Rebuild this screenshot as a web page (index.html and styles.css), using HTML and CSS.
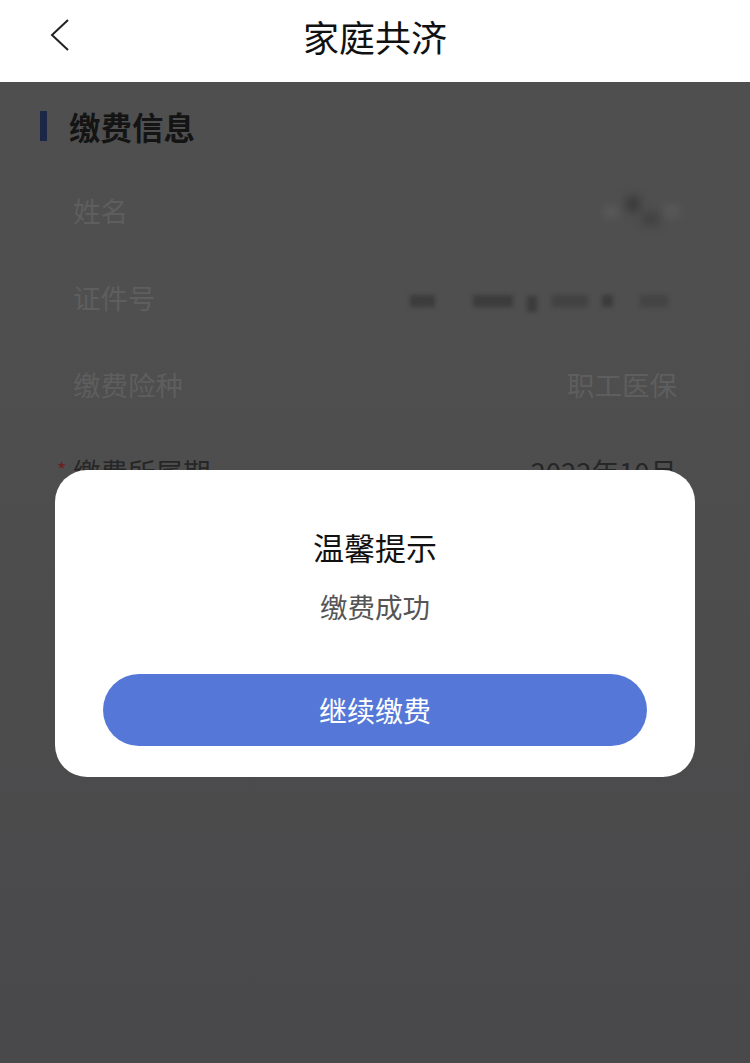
FILE: index.html
```html
<!DOCTYPE html>
<html lang="zh-CN">
<head>
    <meta charset="UTF-8">
    <meta name="viewport" content="width=device-width, initial-scale=1.0">
    <title>家庭共济</title>
    <link rel="stylesheet" href="styles.css">
</head>
<body>
<div class="header">
    <div class="back">
        <svg width="30" height="40" viewBox="0 0 30 40">
            <polyline points="21,5 5,20 21,35" fill="none" stroke="#222" stroke-width="2"/>
        </svg>
    </div>
    <div class="header-title">家庭共济</div>
</div>

<div class="page">
    <div class="section-title">
        <span class="bar"></span>
        <span>缴费信息</span>
    </div>
    <div class="row">
        <div class="label">姓名</div>
        <div class="value">
            <div class="blur-name">
                <span class="px px1"></span>
                <span class="px px2"></span>
                <span class="px px3"></span>
                <span class="px px4"></span>
            </div>
        </div>
    </div>
    <div class="row">
        <div class="label">证件号</div>
        <div class="value">
            <div class="blur-id">
                <span class="seg s1"></span>
                <span class="seg s2"></span>
                <span class="seg s3"></span>
                <span class="seg s4"></span>
                <span class="seg s5"></span>
                <span class="seg s6"></span>
            </div>
        </div>
    </div>
    <div class="row">
        <div class="label">缴费险种</div>
        <div class="value">职工医保</div>
    </div>
    <div class="row dark">
        <div class="label"><span class="star">*</span>缴费所属期</div>
        <div class="value">2022年10月</div>
    </div>
</div>

<div class="mask">
    <div class="dialog">
        <div class="dialog-title">温馨提示</div>
        <div class="dialog-msg">缴费成功</div>
        <div class="dialog-btn">继续缴费</div>
    </div>
</div>
</body>
</html>
```

FILE: styles.css
```css
* {
    box-sizing: border-box;
}
body {
    margin: 0;
    width: 750px;
    height: 1063px;
    overflow: hidden;
    background: linear-gradient(#4f4f4f 300px, #49494b 1063px);
    font-family: "Noto Sans CJK SC", "Noto Sans", sans-serif;
}
.header {
    height: 82px;
    background-color: #fff;
    display: flex;
    align-items: center;
    justify-content: center;
    position: relative;
}
.back {
    position: absolute;
    left: 47px;
    top: 15px;
}
.header-title {
    font-size: 36px;
    color: #111;
    line-height: 44px;
    margin-top: -10px;
}
.page {
    padding-top: 22px;
}
.section-title {
    display: flex;
    align-items: center;
    height: 44px;
    padding-left: 40px;
    font-size: 31.5px;
    font-weight: bold;
    color: #141414;
}
.bar {
    width: 7px;
    height: 30px;
    background-color: #1c2646;
    margin-right: 22px;
}
.row {
    display: flex;
    align-items: center;
    justify-content: space-between;
    height: 87px;
    padding: 0 73px;
    font-size: 27.5px;
    color: #5e5e5e;
}
.section-title + .row {
    margin-top: 18px;
}
.row.dark {
    color: #262626;
}
.label {
    position: relative;
}
.star {
    position: absolute;
    left: -16px;
    top: 4px;
    font-size: 20px;
    color: #6b1f1f;
}
.blur-name {
    width: 88px;
    height: 48px;
    position: relative;
    margin-right: -13px;
    filter: blur(4px);
}
.px {
    position: absolute;
    background-color: #3c3c3c;
}
.px1 {
    left: 24px;
    top: 10px;
    width: 14px;
    height: 16px;
}
.px2 {
    left: 40px;
    top: 26px;
    width: 18px;
    height: 14px;
    background-color: #424242;
}
.px3 {
    left: 2px;
    top: 20px;
    width: 14px;
    height: 12px;
    background-color: #5a5a5a;
}
.px4 {
    left: 62px;
    top: 18px;
    width: 16px;
    height: 14px;
    background-color: #585858;
}
.blur-id {
    display: flex;
    align-items: center;
    filter: blur(2px);
    margin-top: 8px;
    margin-right: 9px;
}
.seg {
    height: 12px;
    background-color: #3c3c3c;
}
.s1 { width: 25px; }
.s2 { width: 40px; margin-left: 38px; }
.s3 { width: 10px; margin-left: 14px; height: 16px; margin-top: 6px; }
.s4 { width: 36px; margin-left: 15px; background-color: #424242; }
.s5 { width: 11px; margin-left: 14px; }
.s6 { width: 28px; margin-left: 27px; background-color: #444; }
.mask {
    position: absolute;
    left: 0;
    top: 82px;
    right: 0;
    bottom: 0;
}
.dialog {
    position: absolute;
    left: 55px;
    top: 388px;
    width: 640px;
    height: 307px;
    background-color: #fff;
    border-radius: 32px;
    padding: 57px 48px 31px;
    text-align: center;
}
.dialog-title {
    font-size: 31px;
    line-height: 40px;
    color: #111;
}
.dialog-msg {
    font-size: 27.5px;
    line-height: 40px;
    color: #555;
    margin-top: 19px;
}
.dialog-btn {
    margin-top: 48px;
    height: 72px;
    border-radius: 36px;
    background-color: #5577d7;
    color: #fff;
    font-size: 28px;
    line-height: 72px;
}
```
